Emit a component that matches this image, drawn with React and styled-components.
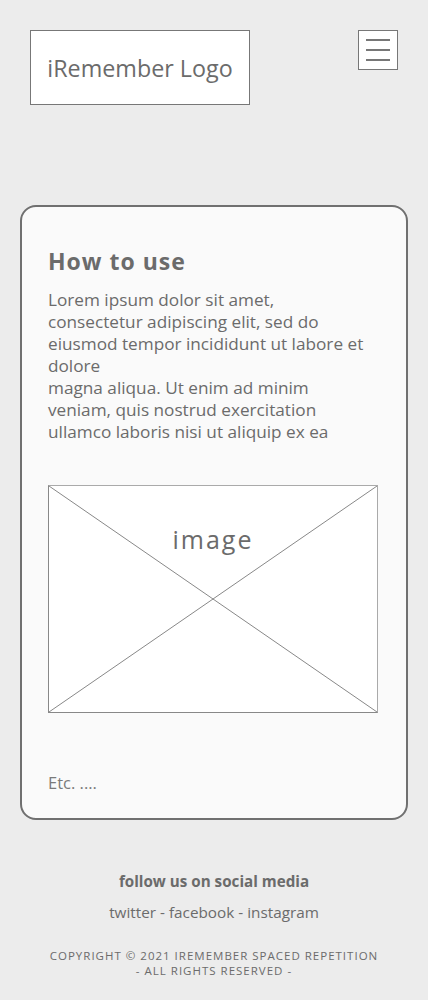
import React from 'react';
import styled, { createGlobalStyle } from 'styled-components';

const GlobalStyle = createGlobalStyle`
  body {
    margin: 0;
    background: #ececec;
    font-family: "Open Sans", "Noto Sans", sans-serif;
    color: #6b6b6b;
  }
`;

const Page = styled.div`
  width: 428px;
  min-height: 1000px;
  padding: 30px 20px 0;
  box-sizing: border-box;
`;

const Header = styled.header`
  display: flex;
  justify-content: space-between;
  align-items: flex-start;
  padding: 0 10px;
`;

const Logo = styled.div`
  width: 220px;
  height: 75px;
  box-sizing: border-box;
  border: 1px solid #777;
  background: #fff;
  display: flex;
  align-items: center;
  justify-content: center;
  font-size: 23.3px;
  color: #6b6b6b;
`;

const MenuButton = styled.button`
  width: 40px;
  height: 40px;
  box-sizing: border-box;
  border: 1px solid #777;
  background: #fff;
  padding: 0;
  display: flex;
  flex-direction: column;
  align-items: center;
  justify-content: center;
  gap: 8px;
`;

const MenuLine = styled.span`
  display: block;
  width: 24px;
  height: 2px;
  background: #777;
`;

const Card = styled.main`
  margin-top: 100px;
  border: 2px solid #707070;
  border-radius: 16px;
  background: #fafafa;
  padding: 38px 26px 24px;
`;

const Title = styled.h2`
  margin: 0 0 12px;
  font-size: 23px;
  font-weight: 700;
  letter-spacing: 1px;
  color: #6b6b6b;
`;

const Text = styled.p`
  margin: 0;
  font-size: 17.2px;
  line-height: 22px;
  color: #6b6b6b;
  white-space: nowrap;
`;

const ImageBox = styled.div`
  position: relative;
  margin: 42px 2px 0 0;
  height: 226px;
  border: 1px solid #888;
  border-top-color: #aaa;
  border-right-color: #aaa;
  background: #fff;
`;

const Cross = styled.svg`
  display: block;
  width: 100%;
  height: 100%;
`;

const ImageLabel = styled.span`
  position: absolute;
  top: 36px;
  left: 0;
  right: 0;
  text-align: center;
  font-size: 25px;
  letter-spacing: 2px;
  color: #6b6b6b;
`;

const Etc = styled.p`
  margin: 58px 0 0;
  font-size: 16.5px;
  color: #7a7a7a;
`;

const Footer = styled.footer`
  display: flex;
  flex-direction: column;
  align-items: center;
  padding-top: 51px;
  text-align: center;
`;

const FollowTitle = styled.div`
  font-size: 15.2px;
  font-weight: 700;
  color: #6b6b6b;
`;

const Socials = styled.div`
  margin-top: 11px;
  font-size: 15.3px;
  color: #6b6b6b;
`;

const Copyright = styled.div`
  margin-top: 26px;
  font-size: 11.5px;
  line-height: 15px;
  letter-spacing: 1px;
  text-transform: uppercase;
  color: #6b6b6b;
`;

const App = () => {
  return (
    <>
      <GlobalStyle />
      <Page>
        <Header>
          <Logo>iRemember Logo</Logo>
          <MenuButton aria-label="menu">
            <MenuLine />
            <MenuLine />
            <MenuLine />
          </MenuButton>
        </Header>

        <Card>
          <Title>How to use</Title>
          <Text>
            Lorem ipsum dolor sit amet,
            <br />
            consectetur adipiscing elit, sed do
            <br />
            eiusmod tempor incididunt ut labore et
            <br />
            dolore
            <br />
            magna aliqua. Ut enim ad minim
            <br />
            veniam, quis nostrud exercitation
            <br />
            ullamco laboris nisi ut aliquip ex ea
          </Text>

          <ImageBox>
            <Cross viewBox="0 0 100 100" preserveAspectRatio="none">
              <line x1="0" y1="0" x2="100" y2="100" stroke="#888" strokeWidth="1" vectorEffect="non-scaling-stroke" />
              <line x1="100" y1="0" x2="0" y2="100" stroke="#888" strokeWidth="1" vectorEffect="non-scaling-stroke" />
            </Cross>
            <ImageLabel>image</ImageLabel>
          </ImageBox>

          <Etc>Etc. ....</Etc>
        </Card>

        <Footer>
          <FollowTitle>follow us on social media</FollowTitle>
          <Socials>twitter - facebook - instagram</Socials>
          <Copyright>
            Copyright © 2021 iRemember spaced repetition
            <br />- All rights reserved -
          </Copyright>
        </Footer>
      </Page>
    </>
  );
};

export default App;
